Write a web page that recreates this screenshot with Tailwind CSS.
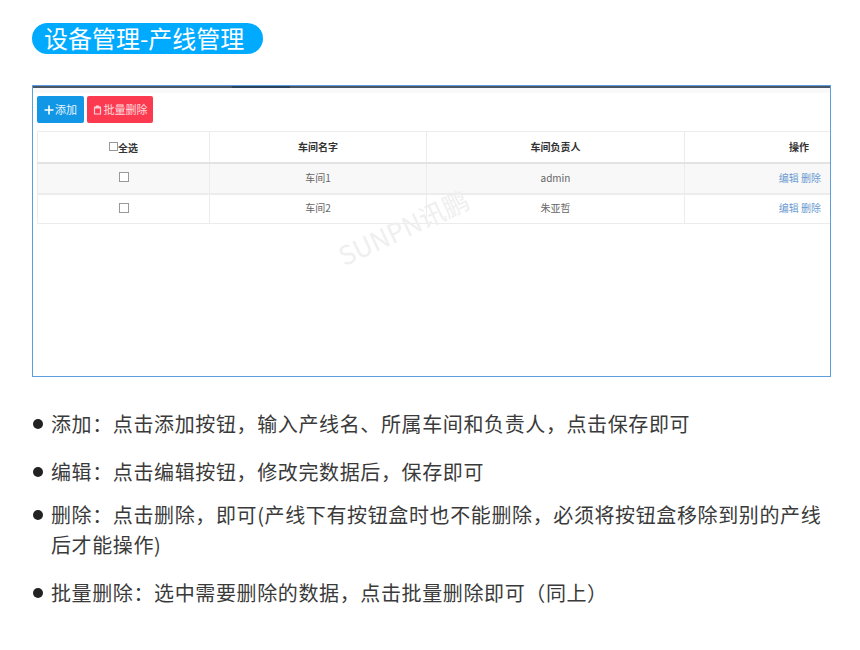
<!DOCTYPE html>
<html lang="zh-CN">
<head>
  <meta charset="UTF-8" />
  <title>设备管理-产线管理</title>
  <script src="https://cdn.jsdelivr.net/npm/@tailwindcss/browser@4"></script>
</head>
<body class="bg-white w-[860px] h-[650px] overflow-hidden font-['Noto_Sans_CJK_SC','Noto_Sans',sans-serif]">
  <div class="pl-[32px] pt-[23px]">
    <h1 class="w-[231px] h-[31px] rounded-full bg-[#00aaff] text-white text-[24px] leading-[30px] pl-[12px] font-normal whitespace-nowrap">设备管理-产线管理</h1>
  </div>

  <div class="relative mt-[31px] ml-[32px] w-[799px] h-[292px] border border-[#5b9fe0] overflow-hidden">
    <div class="h-[2px] bg-[#4a5663] relative">
      <div class="absolute left-[199px] top-[-1px] w-[58px] h-[3px] bg-[#2c4258]"></div>
    </div>
    <div class="h-[5px] bg-[#f9f9f9]"></div>
    <div class="pl-[4px] pt-[3px] flex gap-[3px]">
      <button class="w-[47px] h-[27px] rounded-[2px] bg-[#1296e6] text-white/90 text-[11px] flex items-center justify-center gap-[1px]">
        <svg class="w-[10px] h-[10px]" viewBox="0 0 10 10"><path d="M5 0.5v9M0.5 5h9" stroke="#fff" stroke-width="1.6" fill="none"/></svg>
        添加
      </button>
      <button class="w-[66px] h-[27px] rounded-[2px] bg-[#fb3a4f] text-white/80 text-[11px] flex items-center justify-center gap-[2px]">
        <svg class="w-[9px] h-[10px]" viewBox="0 0 9 10"><path d="M1.5 3h6v6h-6zM1 2h7M3.5 2V1h2v1" stroke="#fbd0d5" stroke-width="1.2" fill="none"/></svg>
        批量删除
      </button>
    </div>

    <table class="ml-[4px] mt-[8px] w-[794px] table-fixed border-collapse text-[10px] text-center">
      <colgroup>
        <col class="w-[172px]" />
        <col class="w-[217px]" />
        <col class="w-[258px]" />
        <col class="w-[147px]" />
      </colgroup>
      <thead>
        <tr class="h-[31px] text-[#333] font-bold">
          <th class="border border-[#ececec] border-b-2 border-b-[#e3e3e3]"><span class="inline-flex items-center"><span class="w-[9px] h-[9px] border border-[#999] mb-[2px]"></span>全选</span></th>
          <th class="border border-[#ececec] border-b-2 border-b-[#e3e3e3]">车间名字</th>
          <th class="border border-[#ececec] border-b-2 border-b-[#e3e3e3]">车间负责人</th>
          <th class="border border-[#ececec] border-b-2 border-b-[#e3e3e3] pl-[82px]">操作</th>
        </tr>
      </thead>
      <tbody class="text-[#666]">
        <tr class="h-[31px] bg-[#f8f8f8]">
          <td class="border border-[#ececec] border-b-2 pb-[2px]"><span class="block mx-auto w-[10px] h-[10px] border border-[#999] bg-white"></span></td>
          <td class="border border-[#ececec] border-b-2 pb-[2px]">车间1</td>
          <td class="border border-[#ececec] border-b-2 pb-[2px]">admin</td>
          <td class="border border-[#ececec] border-b-2 pb-[2px] text-right pr-[10px] text-[#6b9bd1]">编辑 删除</td>
        </tr>
        <tr class="h-[30px]">
          <td class="border border-[#ececec] pb-[2px]"><span class="block mx-auto w-[10px] h-[10px] border border-[#999]"></span></td>
          <td class="border border-[#ececec] pb-[2px]">车间2</td>
          <td class="border border-[#ececec] pb-[2px]">朱亚哲</td>
          <td class="border border-[#ececec] pb-[2px] text-right pr-[10px] text-[#6b9bd1]">编辑 删除</td>
        </tr>
      </tbody>
    </table>

    <div class="absolute left-[300px] top-[128px] -rotate-[25deg] text-[26px] font-normal text-[#efefef] whitespace-nowrap pointer-events-none leading-none">SUNPN讯鹏</div>
  </div>

  <ul class="mt-[32px] ml-[33px] w-[800px] text-[20px] leading-[30px] tracking-[0.62px] text-[#3a3a3a]">
    <li class="flex gap-[8px]">
      <span class="mt-[10px] shrink-0 w-[10px] h-[10px] rounded-full bg-[#222]"></span>
      <span>添加：点击添加按钮，输入产线名、所属车间和负责人，点击保存即可</span>
    </li>
    <li class="flex gap-[8px] mt-[18px]">
      <span class="mt-[10px] shrink-0 w-[10px] h-[10px] rounded-full bg-[#222]"></span>
      <span>编辑：点击编辑按钮，修改完数据后，保存即可</span>
    </li>
    <li class="flex gap-[8px] mt-[13px]">
      <span class="mt-[10px] shrink-0 w-[10px] h-[10px] rounded-full bg-[#222]"></span>
      <span>删除：点击删除，即可(产线下有按钮盒时也不能删除，必须将按钮盒移除到别的产线后才能操作)</span>
    </li>
    <li class="flex gap-[8px] mt-[18px]">
      <span class="mt-[10px] shrink-0 w-[10px] h-[10px] rounded-full bg-[#222]"></span>
      <span>批量删除：选中需要删除的数据，点击批量删除即可（同上）</span>
    </li>
  </ul>
</body>
</html>
